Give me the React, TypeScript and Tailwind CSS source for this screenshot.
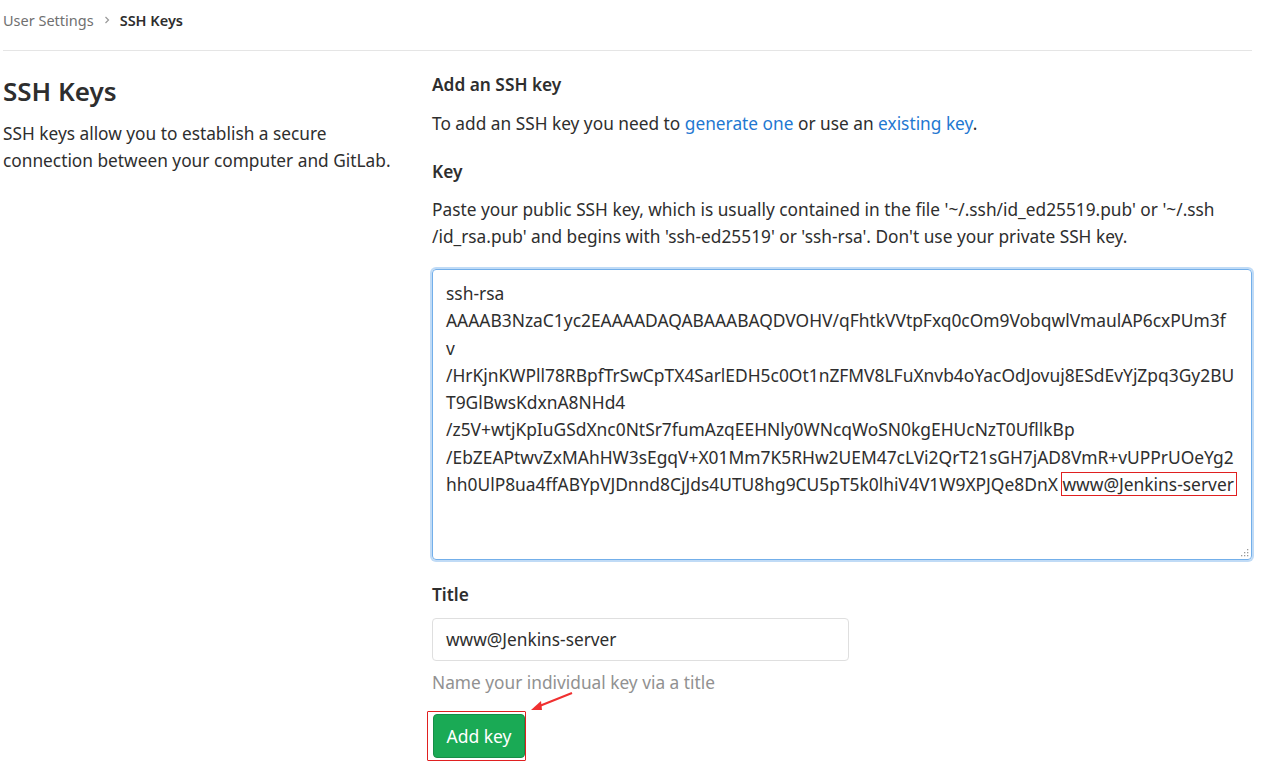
import React from 'react';

const keyLines = [
  'ssh-rsa',
  'AAAAB3NzaC1yc2EAAAADAQABAAABAQDVOHV/qFhtkVVtpFxq0cOm9VobqwlVmaulAP6cxPUm3f',
  'v',
  '/HrKjnKWPll78RBpfTrSwCpTX4SarlEDH5c0Ot1nZFMV8LFuXnvb4oYacOdJovuj8ESdEvYjZpq3Gy2BU',
  'T9GlBwsKdxnA8NHd4',
  '/z5V+wtjKpIuGSdXnc0NtSr7fumAzqEEHNly0WNcqWoSN0kgEHUcNzT0UfllkBp',
  '/EbZEAPtwvZxMAhHW3sEgqV+X01Mm7K5RHw2UEM47cLVi2QrT21sGH7jAD8VmR+vUPPrUOeYg2',
];

export default function App() {
  return (
    <div className="min-h-[766px] bg-white text-[#2e2e2e] text-[17.3px] font-['Noto_Sans','Open_Sans',sans-serif]">
      <div className="ml-[3px] mr-[23px]">
        {/* Breadcrumb */}
        <div className="flex items-start pt-[8px] h-[51px] border-b border-[#e5e5e5] text-[14.5px] leading-[24px]">
          <span className="text-[#707070]">User Settings</span>
          <svg className="mx-[9px] mt-[8px] w-[8px] h-[8px] text-[#999]" viewBox="0 0 8 8" fill="none">
            <path d="M2.5 1l3 3-3 3" stroke="currentColor" strokeWidth="1.2" />
          </svg>
          <span className="font-semibold text-[#2e2e2e]">SSH Keys</span>
        </div>

        <div className="flex pt-[22px]">
          {/* Left column */}
          <div className="w-[429px] shrink-0">
            <h2 className="text-[26px] font-semibold leading-[36px]">SSH Keys</h2>
            <p className="mt-[11px] leading-[27px] w-[400px]">
              SSH keys allow you to establish a secure connection between your computer and GitLab.
            </p>
          </div>

          {/* Right column */}
          <div className="flex-1 min-w-0">
            <h4 className="font-semibold leading-[24px]">Add an SSH key</h4>
            <p className="mt-[15px] leading-[24px]">
              To add an SSH key you need to{' '}
              <a className="text-[#1f78d1]">generate one</a> or use an{' '}
              <a className="text-[#1f78d1]">existing key</a>.
            </p>

            <div className="mt-[24px] font-semibold leading-[24px]">Key</div>
            <p className="mt-[12px] leading-[27px] whitespace-nowrap">
              Paste your public SSH key, which is usually contained in the file '~/.ssh/id_ed25519.pub' or '~/.ssh
              <br />
              /id_rsa.pub' and begins with 'ssh-ed25519' or 'ssh-rsa'. Don't use your private SSH key.
            </p>

            <div className="relative mt-[19px] h-[291px] rounded-[4px] border border-[#73afea] shadow-[0_0_0_2px_rgba(115,175,234,0.45)] px-[13px] pt-[10px] leading-[27.3px] whitespace-nowrap overflow-hidden text-[17.4px]">
              {keyLines.map((l, i) => (
                <div key={i}>{l}</div>
              ))}
              <div className="flex">
                <span>hh0UlP8ua4ffABYpVJDnnd8CjJds4UTU8hg9CU5pT5k0lhiV4V1W9XPJQe8DnX&nbsp;</span>
                <span className="outline outline-1 outline-[#e02020] leading-[22px] mt-[2px] h-[22px] pr-[2px]">
                  www@Jenkins-server
                </span>
              </div>
              <svg className="absolute right-[2px] bottom-[2px] w-[8px] h-[8px]" viewBox="0 0 8 8">
                <g fill="#999">
                  <rect x="6" y="0" width="1.3" height="1.3" />
                  <rect x="3" y="3" width="1.3" height="1.3" />
                  <rect x="6" y="3" width="1.3" height="1.3" />
                  <rect x="0" y="6" width="1.3" height="1.3" />
                  <rect x="3" y="6" width="1.3" height="1.3" />
                  <rect x="6" y="6" width="1.3" height="1.3" />
                </g>
              </svg>
            </div>

            <div className="mt-[23px] font-semibold leading-[24px]">Title</div>
            <div className="mt-[11px] w-[417px] h-[43px] rounded-[4px] border border-[#dfdfdf] px-[13px] flex items-center">
              www@Jenkins-server
            </div>
            <p className="mt-[10px] text-[#919191] leading-[24px]">Name your individual key via a title</p>

            <div className="relative mt-[16px] inline-block">
              <div className="border border-[#e02020] p-[2px] pl-[5px] pr-[0px] rounded-[1px] -ml-[5px]">
                <button className="h-[44px] w-[92px] rounded-[4px] bg-[#1aaa55] border border-[#168f48] text-white text-[17.5px]">
                  Add key
                </button>
              </div>
              <svg className="absolute left-[95px] top-[-20px] w-[50px] h-[24px]" viewBox="0 0 50 24">
                <path d="M45 2 L10 16" stroke="#f03030" strokeWidth="2" />
                <path d="M4 19 L14 10 L15 19 Z" fill="#f03030" />
              </svg>
            </div>
          </div>
        </div>
      </div>
    </div>
  );
}
